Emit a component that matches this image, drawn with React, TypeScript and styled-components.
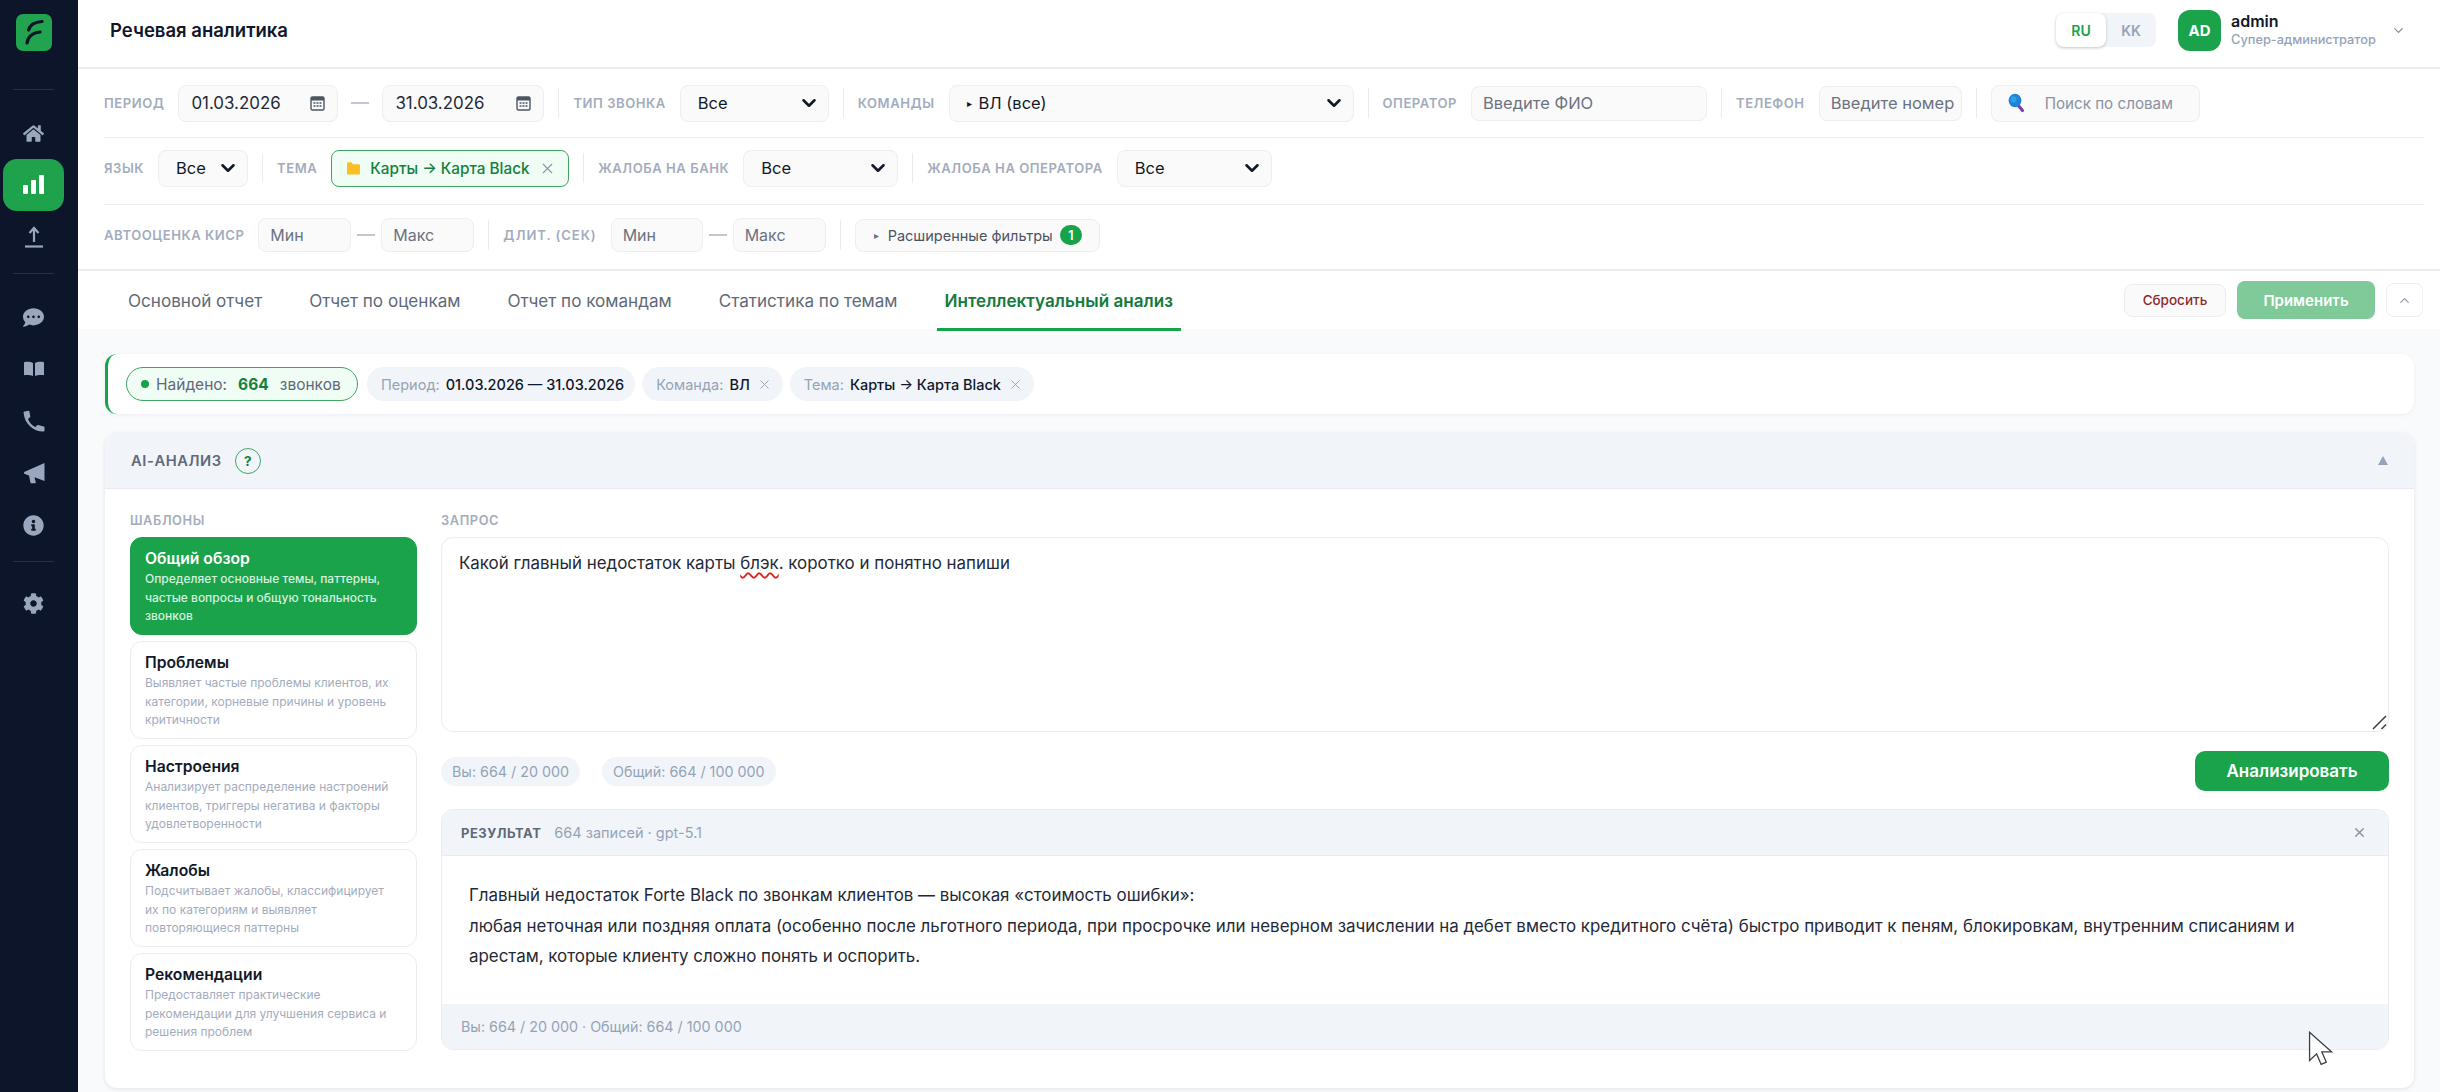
import React from "react";
import styled, { createGlobalStyle } from "styled-components";
import { FaHome, FaCommentDots, FaInfoCircle, FaCog } from "react-icons/fa";
import { ChevronDown, ChevronUp, X } from "lucide-react";

const Global = createGlobalStyle`
  html, body { margin: 0; padding: 0; height: 100%; overflow: hidden; background: #f8fafc; }
  * { box-sizing: border-box; }
  body { font-family: Inter, "Noto Sans", sans-serif; color: #0f172a; }
  input::placeholder { color: #6b7280; opacity: 1; }
`;

const Shell = styled.div`
  position: relative;
  display: flex;
  width: 2440px;
  height: 1092px;
  overflow: hidden;
`;

const Sidebar = styled.aside`
  flex: 0 0 78px;
  background: #0c1529;
  padding: 14px 11px 0 0;
  display: flex;
  flex-direction: column;
  align-items: center;
`;

const Logo = styled.div`
  width: 36px;
  height: 37px;
  border-radius: 7px;
  background: #22a34f;
  margin-bottom: 28px;
  display: flex;
  align-items: center;
  justify-content: center;
`;

const SideDivider = styled.div<{ $after: number }>`
  width: 41px;
  height: 1px;
  background: #263145;
  margin: 10px 0 ${(p) => p.$after}px;
`;

const NavItem = styled.div<{ $active?: boolean }>`
  width: 61px;
  height: 52px;
  display: flex;
  align-items: center;
  justify-content: center;
  color: ${(p) => (p.$active ? "#ffffff" : "#9aa6bd")};
  background: ${(p) => (p.$active ? "#1fa24c" : "transparent")};
  border-radius: 14px;
  font-size: 21px;
`;

const Main = styled.main`
  flex: 1;
  min-width: 0;
  display: flex;
  flex-direction: column;
`;

const Header = styled.header`
  height: 69px;
  flex: none;
  background: #ffffff;
  border-bottom: 2px solid #e8ebef;
  display: flex;
  align-items: center;
  justify-content: space-between;
  padding: 0 34px 7px 32px;
`;

const Title = styled.h1`
  margin: 0;
  font-size: 18.5px;
  font-weight: 600;
  color: #0f172a;
`;

const HeaderRight = styled.div`
  display: flex;
  align-items: center;
`;

const LangGroup = styled.div`
  display: flex;
  width: 100px;
  height: 34px;
  background: #f1f5f9;
  border-radius: 8px;
  margin-right: 22px;
`;

const LangBtn = styled.div<{ $active?: boolean }>`
  flex: 1;
  display: flex;
  align-items: center;
  justify-content: center;
  font-size: 14px;
  font-weight: 600;
  border-radius: 8px;
  color: ${(p) => (p.$active ? "#16a34a" : "#94a3b8")};
  background: ${(p) => (p.$active ? "#ffffff" : "transparent")};
  box-shadow: ${(p) => (p.$active ? "0 1px 3px rgba(15,23,42,.25)" : "none")};
`;

const Avatar = styled.div`
  width: 43px;
  height: 41px;
  border-radius: 12px;
  background: #1ba34b;
  color: #fff;
  font-size: 15px;
  font-weight: 700;
  display: flex;
  align-items: center;
  justify-content: center;
  margin-right: 10px;
`;

const UserBlock = styled.div`
  display: flex;
  flex-direction: column;
  width: 156px;
`;

const UserName = styled.div`
  font-size: 16px;
  font-weight: 600;
  line-height: 20px;
`;

const UserRole = styled.div`
  font-size: 12.8px;
  color: #94a3b8;
  font-weight: 500;
  line-height: 18px;
`;

const HeaderChevron = styled(ChevronDown)`
  color: #7c8798;
  margin-left: 4px;
`;

const Filters = styled.section`
  flex: none;
  height: 202px;
  background: #ffffff;
  border-bottom: 2px solid #e8ebef;
  padding: 0 16px 0 26px;
  display: flex;
  flex-direction: column;
`;

const FilterRow = styled.div<{ $h: number; $last?: boolean; $pb?: number }>`
  height: ${(p) => p.$h}px;
  flex: none;
  display: flex;
  align-items: center;
  gap: 14px;
  padding-bottom: ${(p) => p.$pb ?? 0}px;
  border-bottom: ${(p) => (p.$last ? "none" : "1.5px solid #eceff3")};
`;

const Label = styled.span<{ $ls?: number }>`
  font-size: 13.05px;
  font-weight: 600;
  letter-spacing: ${(p) => p.$ls ?? 0.55}px;
  color: #a3acbd;
  text-transform: uppercase;
  white-space: nowrap;
`;

const Sep = styled.div`
  width: 1px;
  height: 30px;
  background: #e8ebef;
`;

const Field = styled.div<{ $w: number; $h?: number }>`
  width: ${(p) => p.$w}px;
  height: ${(p) => p.$h ?? 37}px;
  flex: none;
  display: flex;
  align-items: center;
  justify-content: space-between;
  padding: 0 12px;
  background: #fafafa;
  border: 1.5px solid #eceef1;
  border-radius: 8px;
  font-size: 16.9px;
  color: #1f2937;
  white-space: nowrap;
`;

const SelectBox = styled(Field)`
  padding-left: 17px;
  font-size: 16.5px;
  color: #111827;
`;

const SelectValue = styled.span`
  display: flex;
  align-items: center;
  gap: 7px;
`;

const ChevronBold = styled(ChevronDown).attrs({ size: 22, strokeWidth: 2.8 })`
  color: #111827;
  margin-right: -4px;
`;

const Input = styled.input<{ $w: number; $h?: number; $fs?: number }>`
  width: ${(p) => p.$w}px;
  height: ${(p) => p.$h ?? 35}px;
  flex: none;
  padding: 0 6px 0 11px;
  background: #fafafa;
  border: 1.5px solid #eceef1;
  border-radius: 8px;
  font: 400 ${(p) => p.$fs ?? 16.5}px Inter, sans-serif;
  color: #1f2937;
  outline: none;
`;

const Dash = styled.span`
  width: 18px;
  height: 2px;
  margin: 0 -1px;
  background: #c3c8d0;
  flex: none;
`;

const RangeGroup = styled.div`
  display: flex;
  align-items: center;
  gap: 7px;
`;

const SearchBox = styled.div`
  width: 209px;
  height: 37px;
  display: flex;
  align-items: center;
  gap: 18px;
  padding-left: 15px;
  background: #fafafa;
  border: 1.5px solid #eceef1;
  border-radius: 8px;
  font-size: 15.2px;
  color: #8a93a3;
`;

const ThemeChip = styled.div`
  width: 238px;
  height: 37px;
  flex: none;
  display: flex;
  align-items: center;
  gap: 9px;
  padding: 0 12px 0 14px;
  background: #f0fdf4;
  border: 1.5px solid #3fa565;
  border-radius: 8px;
  font-size: 15.3px;
  font-weight: 500;
  color: #15803d;
  white-space: nowrap;
`;

const ChipClose = styled(X).attrs({ size: 17, strokeWidth: 1.6 })`
  color: #8b95a5;
  margin-left: auto;
`;

const AdvancedBtn = styled.div`
  width: 245px;
  height: 33px;
  flex: none;
  display: flex;
  align-items: center;
  padding-left: 18px;
  gap: 9px;
  background: #fafafa;
  border: 1.5px solid #eceef1;
  border-radius: 8px;
  font-size: 14.5px;
  font-weight: 400;
  color: #4b5563;
  white-space: nowrap;
`;

const Tri = styled.span`
  font-size: 10px;
  color: #6b7280;
`;

const TeamTri = styled(Tri)`
  color: #111827;
`;

const CountBadge = styled.span`
  width: 22px;
  height: 20px;
  border-radius: 10px;
  background: #16a34a;
  color: #fff;
  font-size: 12.5px;
  font-weight: 600;
  display: flex;
  align-items: center;
  justify-content: center;
  margin-left: -2px;
`;

const TabBar = styled.nav`
  flex: none;
  height: 58px;
  background: #ffffff;
  padding: 0 17px 0 42px;
  display: flex;
  align-items: flex-start;
  gap: 31px;
`;

const Tab = styled.div<{ $active?: boolean }>`
  height: 60px;
  padding: 1px 8px 0;
  display: flex;
  align-items: center;
  font-size: 17.1px;
  white-space: nowrap;
  font-weight: ${(p) => (p.$active ? 600 : 400)};
  color: ${(p) => (p.$active ? "#167a3c" : "#5f6979")};
  border-bottom: ${(p) => (p.$active ? "3px solid #16a34a" : "3px solid transparent")};
  position: relative;
  z-index: 1;
`;

const TabActions = styled.div`
  margin-left: auto;
  height: 58px;
  display: flex;
  align-items: center;
  gap: 11px;
`;

const ResetBtn = styled.div`
  width: 102px;
  height: 33px;
  display: flex;
  align-items: center;
  justify-content: center;
  background: #fafafa;
  border: 1.5px solid #eceef1;
  border-radius: 8px;
  font-size: 13.5px;
  font-weight: 500;
  color: #8f2a2a;
`;

const ApplyBtn = styled.div`
  width: 138px;
  height: 38px;
  display: flex;
  align-items: center;
  justify-content: center;
  background: #80c998;
  border-radius: 8px;
  font-size: 15px;
  font-weight: 600;
  color: #fff;
`;

const CollapseBtn = styled.div`
  width: 37px;
  height: 34px;
  display: flex;
  align-items: center;
  justify-content: center;
  background: #fff;
  border: 1.5px solid #eceef1;
  border-radius: 8px;
  color: #8b95a5;
`;

const Content = styled.div`
  flex: 1;
  min-height: 0;
  background: #f8fafc;
  padding: 25px 26px 0 27px;
  display: flex;
  flex-direction: column;
  gap: 19px;
`;

const StatsBar = styled.div`
  height: 60px;
  flex: none;
  display: flex;
  align-items: center;
  gap: 7px;
  padding-left: 18px;
  background: #fff;
  border-left: 3px solid #16a34a;
  border-radius: 12px;
  box-shadow: 0 1px 4px rgba(15, 23, 42, 0.05);
`;

const FoundChip = styled.div`
  width: 232px;
  margin-right: 2px;
  height: 34px;
  display: flex;
  align-items: center;
  padding-left: 14px;
  background: #f0fdf4;
  border: 1.5px solid #3fa565;
  border-radius: 17px;
  font-size: 15.5px;
  color: #5f6979;
  white-space: nowrap;
`;

const Dot = styled.span`
  width: 8px;
  height: 8px;
  border-radius: 50%;
  background: #16a34a;
  margin-right: 7px;
`;

const FoundCount = styled.b`
  font-weight: 700;
  color: #15803d;
  margin: 0 11px;
`;

const FilterChip = styled.div`
  height: 34px;
  display: flex;
  align-items: center;
  gap: 6px;
  padding: 0 11px 0 14px;
  background: #f1f5f9;
  border-radius: 17px;
  font-size: 14.5px;
  color: #94a3b8;
  white-space: nowrap;
`;

const FilterChipValue = styled.span`
  color: #0f172a;
  font-weight: 500;
`;

const FilterChipClose = styled(X).attrs({ size: 15, strokeWidth: 1.5 })`
  color: #94a3b8;
  margin-left: 1px;
`;

const AiCard = styled.section`
  height: 655px;
  flex: none;
  background: #fff;
  border-radius: 12px;
  box-shadow: 0 1px 4px rgba(15, 23, 42, 0.1);
  display: flex;
  flex-direction: column;
  overflow: hidden;
`;

const AiHeader = styled.div`
  height: 56px;
  flex: none;
  background: #f1f5f9;
  border-bottom: 1.5px solid #e8ebef;
  display: flex;
  align-items: center;
  padding: 0 26px;
`;

const AiTitle = styled.span`
  font-size: 14.7px;
  font-weight: 600;
  letter-spacing: 0.6px;
  color: #5f6979;
`;

const HelpCircle = styled.span`
  width: 26px;
  height: 26px;
  border-radius: 50%;
  border: 1.5px solid #3fa565;
  margin-left: 13px;
  color: #15803d;
  font-size: 13.5px;
  font-weight: 700;
  display: flex;
  align-items: center;
  justify-content: center;
`;

const Caret = styled.span`
  margin-left: auto;
  width: 0;
  height: 0;
  border-left: 5.5px solid transparent;
  border-right: 5.5px solid transparent;
  border-bottom: 9px solid #94a3b8;
`;

const AiBody = styled.div`
  flex: 1;
  min-height: 0;
  display: grid;
  grid-template-columns: 287px 1fr;
  column-gap: 24px;
  padding: 24px 25px 0 25px;
`;

const Column = styled.div`
  display: flex;
  flex-direction: column;
  min-width: 0;
`;

const SectionLabel = styled.div`
  height: 24px;
  font-size: 12.8px;
  font-weight: 600;
  letter-spacing: 0.6px;
  color: #a3acbd;
`;

const TemplateList = styled.div`
  display: flex;
  flex-direction: column;
  gap: 6px;
`;

const TemplateCard = styled.div<{ $active?: boolean }>`
  height: 98px;
  padding: 11px 18px 0 14px;
  border-radius: 12px;
  background: ${(p) => (p.$active ? "#1ba34b" : "#fff")};
  border: 1.5px solid ${(p) => (p.$active ? "#1ba34b" : "#e9ecf0")};
`;

const TemplateTitle = styled.div<{ $active?: boolean }>`
  font-size: 15.7px;
  font-weight: 600;
  line-height: 20px;
  margin-bottom: 1px;
  color: ${(p) => (p.$active ? "#fff" : "#111827")};
`;

const TemplateDesc = styled.div<{ $active?: boolean }>`
  font-size: 12px;
  line-height: 18.5px;
  font-weight: ${(p) => (p.$active ? 500 : 400)};
  color: ${(p) => (p.$active ? "#d5f1df" : "#a3acbd")};
`;

const QueryBox = styled.div`
  position: relative;
  height: 195px;
  flex: none;
  padding: 13px 17px;
  border: 1.5px solid #e9ecf0;
  border-radius: 12px;
  font-size: 16.9px;
  line-height: 24px;
  color: #1f2937;
`;

const Grip = styled.svg`
  position: absolute;
  right: 1px;
  bottom: 1px;
  width: 15px;
  height: 15px;
`;

const Squiggle = styled.span`
  text-decoration: underline wavy #dc2626 1.5px;
  text-underline-offset: 3px;
`;

const QueryFooter = styled.div`
  height: 77px;
  flex: none;
  display: flex;
  align-items: center;
  gap: 22px;
  padding-top: 1px;
`;

const QuotaChip = styled.div`
  height: 29px;
  padding: 0 11px;
  display: flex;
  align-items: center;
  background: #f1f5f9;
  border-radius: 15px;
  font-size: 14.3px;
  color: #94a3b8;
  white-space: nowrap;
`;

const AnalyzeBtn = styled.div`
  margin-left: auto;
  width: 194px;
  height: 40px;
  display: flex;
  align-items: center;
  justify-content: center;
  background: #1ba34b;
  border-radius: 10px;
  font-size: 17px;
  font-weight: 600;
  color: #fff;
`;

const ResultCard = styled.div`
  height: 241px;
  flex: none;
  border: 1.5px solid #e9ecf0;
  border-radius: 12px;
  overflow: hidden;
  display: flex;
  flex-direction: column;
`;

const ResultHeader = styled.div`
  height: 46px;
  flex: none;
  background: #f1f5f9;
  border-bottom: 1.5px solid #e8ebef;
  display: flex;
  align-items: center;
  gap: 13px;
  padding: 0 21px 0 19px;
`;

const ResultTitle = styled.span`
  font-size: 13px;
  font-weight: 700;
  letter-spacing: 0.5px;
  color: #5f6979;
`;

const ResultMeta = styled.span`
  font-size: 14.5px;
  color: #94a3b8;
`;

const ResultClose = styled(X).attrs({ size: 15, strokeWidth: 2.4 })`
  margin-left: auto;
  color: #8b95a5;
`;

const ResultBody = styled.div`
  flex: 1;
  padding: 24px 27px 0;
  font-size: 16.9px;
  line-height: 30.5px;
  color: #1f2937;
`;

const ResultFooter = styled.div`
  height: 45px;
  flex: none;
  background: #f1f5f9;
  display: flex;
  align-items: center;
  padding-left: 19px;
  font-size: 14.3px;
  color: #94a3b8;
`;

const Cursor = styled.svg`
  position: absolute;
  left: 2308px;
  top: 1031px;
  width: 25px;
  height: 36px;
`;

const CalendarIcon = () => (
  <svg width="15" height="16" viewBox="0 0 15 16" fill="none">
    <rect x="1" y="2" width="13" height="13" rx="1.5" stroke="#4b5563" strokeWidth="1.4" />
    <rect x="1" y="2" width="13" height="3.5" fill="#4b5563" />
    <path d="M3.5 8h2M6.5 8h2M9.5 8h2M3.5 11h2M6.5 11h2M9.5 11h2" stroke="#4b5563" strokeWidth="1.3" />
  </svg>
);

const FolderIcon = () => (
  <svg width="15" height="16" viewBox="0 0 15 16">
    <path d="M1 3.5A1.2 1.2 0 0 1 2.2 2.3h3.4l1.3 2h5.9A1.2 1.2 0 0 1 14 5.5v7.8a1.2 1.2 0 0 1-1.2 1.2H2.2A1.2 1.2 0 0 1 1 13.3Z" fill="#fbbf24" />
  </svg>
);

const SearchIcon = () => (
  <svg width="20" height="20" viewBox="0 0 20 20">
    <path d="M10.5 11.5l5 6" stroke="#7c3fb0" strokeWidth="3.2" strokeLinecap="round" />
    <ellipse cx="8" cy="7.5" rx="6.4" ry="6.8" fill="#1d83d6" />
    <ellipse cx="6.5" cy="6.5" rx="3" ry="3.3" fill="#2f9fe8" />
  </svg>
);

const BarsIcon = () => (
  <svg width="21" height="20" viewBox="0 0 21 20" fill="#fff">
    <rect x="0" y="10" width="5" height="9" rx="1" />
    <rect x="8" y="5" width="5" height="14" rx="1" />
    <rect x="16" y="0" width="5" height="19" rx="1" />
  </svg>
);

const UploadIcon = () => (
  <svg width="20" height="22" viewBox="0 0 20 22" fill="none" stroke="#9aa6bd" strokeWidth="2.2">
    <path d="M10 16V2.500M5.500 7L10 2l4.500 5" />
    <path d="M1 20.500h18" />
  </svg>
);

const PhoneIcon = () => (
  <svg width="22" height="22" viewBox="0 0 22 22" fill="#9aa6bd">
    <path d="M1.500 1.500 5.600.8c.5 0 .7.3.8.6l.9 5c.1.4-.1.7-.3.9L5 9c1.200 3.400 4 6.600 7.500 8l1.700-1.700c.3-.3.600-.3 1-.2l5.600 1.300c.4.1.7.4.7.8v3.300c0 .8-.5 1.200-1.200 1.100C10.300 21.300 1.500 14 .6 2.700c-.1-.6.300-1.100.9-1.200Z" />
  </svg>
);

const BookIcon = () => (
  <svg width="22" height="16" viewBox="0 0 22 16" fill="#9aa6bd">
    <path d="M1 1.200C4 .5 7.500.6 10 2v13c-2.500-1-6-1.200-9-.8Z" />
    <path d="M21 1.200C18 .5 14.500.6 12 2v13c2.500-1 6-1.200 9-.8Z" />
  </svg>
);

const MegaphoneIcon = () => (
  <svg width="22" height="22" viewBox="0 0 22 22" fill="#9aa6bd">
    <path d="M21.500 1v18L11.500 15.200l1.300 5.300c.1.500-.2.800-.6.800H8.300c-.4 0-.7-.2-.8-.6L6 13.500 1.800 12c-1-.4-1.200-1.800-.1-2.300Z" />
  </svg>
);

const LogoMark = () => (
  <svg width="36" height="37" viewBox="0 0 36 37" fill="none" stroke="#0c1529" strokeLinecap="round">
    <path d="M12.500 16C14 10.500 19 8 26 7.500" strokeWidth="3.2" />
    <path d="M11 29C12 22 16 19 24 18" strokeWidth="3.2" />
  </svg>
);

const templates = [
  { t: "Общий обзор", d: "Определяет основные темы, паттерны, частые вопросы и общую тональность звонков", active: true },
  { t: "Проблемы", d: "Выявляет частые проблемы клиентов, их категории, корневые причины и уровень критичности" },
  { t: "Настроения", d: "Анализирует распределение настроений клиентов, триггеры негатива и факторы удовлетворенности" },
  { t: "Жалобы", d: "Подсчитывает жалобы, классифицирует их по категориям и выявляет повторяющиеся паттерны" },
  { t: "Рекомендации", d: "Предоставляет практические рекомендации для улучшения сервиса и решения проблем" },
];

export default function App() {
  return (
    <Shell>
      <Global />
      <Sidebar>
        <Logo><LogoMark /></Logo>
        <SideDivider $after={17} />
        <NavItem><FaHome /></NavItem>
        <NavItem $active><BarsIcon /></NavItem>
        <NavItem><UploadIcon /></NavItem>
        <SideDivider $after={17} />
        <NavItem><FaCommentDots /></NavItem>
        <NavItem><BookIcon /></NavItem>
        <NavItem><PhoneIcon /></NavItem>
        <NavItem><MegaphoneIcon /></NavItem>
        <NavItem><FaInfoCircle /></NavItem>
        <SideDivider $after={15} />
        <NavItem><FaCog /></NavItem>
      </Sidebar>
      <Main>
        <Header>
          <Title>Речевая аналитика</Title>
          <HeaderRight>
            <LangGroup>
              <LangBtn $active>RU</LangBtn>
              <LangBtn>KK</LangBtn>
            </LangGroup>
            <Avatar>AD</Avatar>
            <UserBlock>
              <UserName>admin</UserName>
              <UserRole>Супер-администратор</UserRole>
            </UserBlock>
            <HeaderChevron size={15} strokeWidth={1.8} />
          </HeaderRight>
        </Header>
        <Filters>
          <FilterRow $h={69}>
            <Label>Период</Label>
            <Field $w={160}>01.03.2026<CalendarIcon /></Field>
            <Dash />
            <Field $w={162}>31.03.2026<CalendarIcon /></Field>
            <Sep />
            <Label>Тип звонка</Label>
            <SelectBox $w={149}>Все<ChevronBold /></SelectBox>
            <Sep />
            <Label>Команды</Label>
            <SelectBox $w={405}><SelectValue><TeamTri>▸</TeamTri>ВЛ (все)</SelectValue><ChevronBold /></SelectBox>
            <Sep />
            <Label>Оператор</Label>
            <Input $w={236} placeholder="Введите ФИО" />
            <Sep />
            <Label>Телефон</Label>
            <Input $w={143} placeholder="Введите номер" />
            <Sep />
            <SearchBox><SearchIcon />Поиск по словам</SearchBox>
          </FilterRow>
          <FilterRow $h={67} $pb={6}>
            <Label>Язык</Label>
            <SelectBox $w={90}>Все<ChevronBold /></SelectBox>
            <Sep />
            <Label>Тема</Label>
            <ThemeChip><FolderIcon />Карты → Карта Black<ChipClose /></ThemeChip>
            <Sep />
            <Label>Жалоба на банк</Label>
            <SelectBox $w={155}>Все<ChevronBold /></SelectBox>
            <Sep />
            <Label>Жалоба на оператора</Label>
            <SelectBox $w={155}>Все<ChevronBold /></SelectBox>
          </FilterRow>
          <FilterRow $h={64} $pb={4} $last>
            <Label>Автооценка КИСР</Label>
            <RangeGroup>
              <Input $w={93} $h={34} $fs={16} placeholder="Мин" />
              <Dash />
              <Input $w={93} $h={34} $fs={16} placeholder="Макс" />
            </RangeGroup>
            <Sep />
            <Label $ls={0.95}>Длит. (сек)</Label>
            <RangeGroup>
              <Input $w={92} $h={34} $fs={16} placeholder="Мин" />
              <Dash />
              <Input $w={93} $h={34} $fs={16} placeholder="Макс" />
            </RangeGroup>
            <Sep />
            <AdvancedBtn><Tri>▸</Tri>Расширенные фильтры<CountBadge>1</CountBadge></AdvancedBtn>
          </FilterRow>
        </Filters>
        <TabBar>
          <Tab>Основной отчет</Tab>
          <Tab>Отчет по оценкам</Tab>
          <Tab>Отчет по командам</Tab>
          <Tab>Статистика по темам</Tab>
          <Tab $active>Интеллектуальный анализ</Tab>
          <TabActions>
            <ResetBtn>Сбросить</ResetBtn>
            <ApplyBtn>Применить</ApplyBtn>
            <CollapseBtn><ChevronUp size={15} strokeWidth={1.8} /></CollapseBtn>
          </TabActions>
        </TabBar>
        <Content>
          <StatsBar>
            <FoundChip><Dot />Найдено:<FoundCount>664</FoundCount>звонков</FoundChip>
            <FilterChip>Период: <FilterChipValue>01.03.2026 — 31.03.2026</FilterChipValue></FilterChip>
            <FilterChip>Команда: <FilterChipValue>ВЛ</FilterChipValue><FilterChipClose /></FilterChip>
            <FilterChip>Тема: <FilterChipValue>Карты → Карта Black</FilterChipValue><FilterChipClose /></FilterChip>
          </StatsBar>
          <AiCard>
            <AiHeader>
              <AiTitle>AI-АНАЛИЗ</AiTitle>
              <HelpCircle>?</HelpCircle>
              <Caret />
            </AiHeader>
            <AiBody>
              <Column>
                <SectionLabel>ШАБЛОНЫ</SectionLabel>
                <TemplateList>
                  {templates.map((x) => (
                    <TemplateCard key={x.t} $active={x.active}>
                      <TemplateTitle $active={x.active}>{x.t}</TemplateTitle>
                      <TemplateDesc $active={x.active}>{x.d}</TemplateDesc>
                    </TemplateCard>
                  ))}
                </TemplateList>
              </Column>
              <Column>
                <SectionLabel>ЗАПРОС</SectionLabel>
                <QueryBox>
                  Какой главный недостаток карты <Squiggle>блэк</Squiggle>. коротко и понятно напиши
                  <Grip viewBox="0 0 15 15" fill="none" stroke="#3a3f47" strokeWidth="1.5">
                    <path d="M1 14 14 1M9.500 14 14 9.500" />
                  </Grip>
                </QueryBox>
                <QueryFooter>
                  <QuotaChip>Вы: 664 / 20 000</QuotaChip>
                  <QuotaChip>Общий: 664 / 100 000</QuotaChip>
                  <AnalyzeBtn>Анализировать</AnalyzeBtn>
                </QueryFooter>
                <ResultCard>
                  <ResultHeader>
                    <ResultTitle>РЕЗУЛЬТАТ</ResultTitle>
                    <ResultMeta>664 записей · gpt-5.1</ResultMeta>
                    <ResultClose />
                  </ResultHeader>
                  <ResultBody>
                    Главный недостаток Forte Black по звонкам клиентов — высокая «стоимость ошибки»:
                    <br />
                    любая неточная или поздняя оплата (особенно после льготного периода, при просрочке или неверном зачислении на дебет вместо кредитного счёта) быстро приводит к пеням, блокировкам, внутренним списаниям и арестам, которые клиенту сложно понять и оспорить.
                  </ResultBody>
                  <ResultFooter>Вы: 664 / 20 000 · Общий: 664 / 100 000</ResultFooter>
                </ResultCard>
              </Column>
            </AiBody>
          </AiCard>
        </Content>
      </Main>
      <Cursor viewBox="0 0 19 28">
        <path d="M1 1v22l5.500-5.200L10 26l4-1.800-3.500-8H18Z" fill="#fff" stroke="#3a3f47" strokeWidth="1" />
      </Cursor>
    </Shell>
  );
}
